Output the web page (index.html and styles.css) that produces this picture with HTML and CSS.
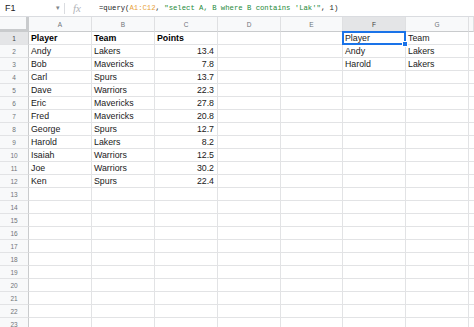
FILE: index.html
```html
<!DOCTYPE html>
<html>
<head>
<meta charset="utf-8">
<link rel="stylesheet" href="styles.css">
</head>
<body>
<div class="app">
  <div class="fbar">
    <div class="namebox"><span class="ref">F1</span><span class="caret">▾</span></div>
    <div class="sep"></div>
    <div class="fx">fx</div>
    <div class="formula"><span>=query(</span><span class="rng">A1:C12</span><span>, </span><span class="str">"select A, B where B contains 'Lak'"</span><span>, 1)</span></div>
  </div>
  <div class="sheet">
    <div class="row head">
      <div class="corner"></div>
      <div class="ch">A</div><div class="ch">B</div><div class="ch">C</div><div class="ch">D</div><div class="ch">E</div><div class="ch sel">F</div><div class="ch">G</div><div class="ch"></div>
    </div>
    <div class="row"><div class="rh sel">1</div><div class="c b">Player</div><div class="c b">Team</div><div class="c b">Points</div><div class="c"></div><div class="c"></div><div class="c active">Player<span class="handle"></span></div><div class="c">Team</div><div class="c"></div></div>
    <div class="row"><div class="rh">2</div><div class="c">Andy</div><div class="c">Lakers</div><div class="c n">13.4</div><div class="c"></div><div class="c"></div><div class="c">Andy</div><div class="c">Lakers</div><div class="c"></div></div>
    <div class="row"><div class="rh">3</div><div class="c">Bob</div><div class="c">Mavericks</div><div class="c n">7.8</div><div class="c"></div><div class="c"></div><div class="c">Harold</div><div class="c">Lakers</div><div class="c"></div></div>
    <div class="row"><div class="rh">4</div><div class="c">Carl</div><div class="c">Spurs</div><div class="c n">13.7</div><div class="c"></div><div class="c"></div><div class="c"></div><div class="c"></div><div class="c"></div></div>
    <div class="row"><div class="rh">5</div><div class="c">Dave</div><div class="c">Warriors</div><div class="c n">22.3</div><div class="c"></div><div class="c"></div><div class="c"></div><div class="c"></div><div class="c"></div></div>
    <div class="row"><div class="rh">6</div><div class="c">Eric</div><div class="c">Mavericks</div><div class="c n">27.8</div><div class="c"></div><div class="c"></div><div class="c"></div><div class="c"></div><div class="c"></div></div>
    <div class="row"><div class="rh">7</div><div class="c">Fred</div><div class="c">Mavericks</div><div class="c n">20.8</div><div class="c"></div><div class="c"></div><div class="c"></div><div class="c"></div><div class="c"></div></div>
    <div class="row"><div class="rh">8</div><div class="c">George</div><div class="c">Spurs</div><div class="c n">12.7</div><div class="c"></div><div class="c"></div><div class="c"></div><div class="c"></div><div class="c"></div></div>
    <div class="row"><div class="rh">9</div><div class="c">Harold</div><div class="c">Lakers</div><div class="c n">8.2</div><div class="c"></div><div class="c"></div><div class="c"></div><div class="c"></div><div class="c"></div></div>
    <div class="row"><div class="rh">10</div><div class="c">Isaiah</div><div class="c">Warriors</div><div class="c n">12.5</div><div class="c"></div><div class="c"></div><div class="c"></div><div class="c"></div><div class="c"></div></div>
    <div class="row"><div class="rh">11</div><div class="c">Joe</div><div class="c">Warriors</div><div class="c n">30.2</div><div class="c"></div><div class="c"></div><div class="c"></div><div class="c"></div><div class="c"></div></div>
    <div class="row"><div class="rh">12</div><div class="c">Ken</div><div class="c">Spurs</div><div class="c n">22.4</div><div class="c"></div><div class="c"></div><div class="c"></div><div class="c"></div><div class="c"></div></div>
    <div class="row"><div class="rh">13</div><div class="c"></div><div class="c"></div><div class="c"></div><div class="c"></div><div class="c"></div><div class="c"></div><div class="c"></div><div class="c"></div></div>
    <div class="row"><div class="rh">14</div><div class="c"></div><div class="c"></div><div class="c"></div><div class="c"></div><div class="c"></div><div class="c"></div><div class="c"></div><div class="c"></div></div>
    <div class="row"><div class="rh">15</div><div class="c"></div><div class="c"></div><div class="c"></div><div class="c"></div><div class="c"></div><div class="c"></div><div class="c"></div><div class="c"></div></div>
    <div class="row"><div class="rh">16</div><div class="c"></div><div class="c"></div><div class="c"></div><div class="c"></div><div class="c"></div><div class="c"></div><div class="c"></div><div class="c"></div></div>
    <div class="row"><div class="rh">17</div><div class="c"></div><div class="c"></div><div class="c"></div><div class="c"></div><div class="c"></div><div class="c"></div><div class="c"></div><div class="c"></div></div>
    <div class="row"><div class="rh">18</div><div class="c"></div><div class="c"></div><div class="c"></div><div class="c"></div><div class="c"></div><div class="c"></div><div class="c"></div><div class="c"></div></div>
    <div class="row"><div class="rh">19</div><div class="c"></div><div class="c"></div><div class="c"></div><div class="c"></div><div class="c"></div><div class="c"></div><div class="c"></div><div class="c"></div></div>
    <div class="row"><div class="rh">20</div><div class="c"></div><div class="c"></div><div class="c"></div><div class="c"></div><div class="c"></div><div class="c"></div><div class="c"></div><div class="c"></div></div>
    <div class="row"><div class="rh">21</div><div class="c"></div><div class="c"></div><div class="c"></div><div class="c"></div><div class="c"></div><div class="c"></div><div class="c"></div><div class="c"></div></div>
    <div class="row"><div class="rh">22</div><div class="c"></div><div class="c"></div><div class="c"></div><div class="c"></div><div class="c"></div><div class="c"></div><div class="c"></div><div class="c"></div></div>
    <div class="row"><div class="rh">23</div><div class="c"></div><div class="c"></div><div class="c"></div><div class="c"></div><div class="c"></div><div class="c"></div><div class="c"></div><div class="c"></div></div>
  </div>
</div>
</body>
</html>
```
FILE: styles.css
```css
* { box-sizing: border-box; }
html, body { margin: 0; padding: 0; }
body {
  width: 474px;
  height: 327px;
  overflow: hidden;
  background: #fff;
  font-family: "Liberation Sans", Arial, sans-serif;
  color: #1f1f1f;
}
.app { display: flex; flex-direction: column; }
.fbar {
  height: 17px;
  display: flex;
  align-items: center;
  border-bottom: 1px solid #dadce0;
  background: #fff;
}
.namebox {
  width: 64px;
  display: flex;
  align-items: center;
  justify-content: space-between;
  padding: 0 4px 0 5px;
  font-size: 9px;
  color: #202124;
}
.caret { font-size: 7px; color: #80868b; }
.sep { width: 1px; height: 11px; background: #dadce0; }
.fx {
  width: 34px;
  padding-left: 8px;
  font-family: "Liberation Serif", serif;
  font-style: italic;
  font-size: 11px;
  color: #b0b3b8;
}
.formula {
  font-family: "Liberation Mono", monospace;
  font-size: 7.25px;
  color: #202124;
  white-space: nowrap;
}
.rng { color: #e8a23a; }
.str { color: #1e8a3a; }
.sheet { display: flex; flex-direction: column; }
.row {
  display: grid;
  grid-template-columns: 29px 63px 63px 63px 63px 62px 63px 63px 1fr;
  height: 13px;
}
.row.head { height: 15px; }
.corner {
  background: #f8f9fa;
  border-right: 3px solid #c9cbcd;
  border-bottom: 3px solid #c9cbcd;
}
.ch {
  background: #f8f9fa;
  border-right: 1px solid #dfe0e2;
  border-bottom: 1px solid #c9cbcd;
  font-size: 6.5px;
  color: #6f7378;
  display: flex;
  align-items: center;
  justify-content: center;
}
.ch.sel { background: #e4e5e7; color: #3c4043; }
.rh {
  background: #f8f9fa;
  border-right: 1px solid #c9cbcd;
  border-bottom: 1px solid #e2e3e5;
  font-size: 6.5px;
  color: #6f7378;
  display: flex;
  align-items: center;
  justify-content: center;
}
.rh.sel { background: #e4e5e7; color: #3c4043; }
.c {
  border-right: 1px solid #e2e3e5;
  border-bottom: 1px solid #e2e3e5;
  font-size: 8.8px;
  line-height: 12px;
  padding: 0 3px 0 2px;
  white-space: nowrap;
  overflow: hidden;
  color: #1a1a1a;
}
.c.b { font-weight: bold; color: #000; }
.c.n { text-align: right; }
.c.active { position: relative; overflow: visible; }
.c.active::after {
  content: "";
  position: absolute;
  left: -1px;
  top: -1px;
  right: -1px;
  bottom: -1px;
  border: 2px solid #1a73e8;
  pointer-events: none;
}
.handle {
  position: absolute;
  right: -3px;
  bottom: -3px;
  width: 6px;
  height: 6px;
  background: #1a73e8;
  border: 1px solid #fff;
  z-index: 2;
}
```
